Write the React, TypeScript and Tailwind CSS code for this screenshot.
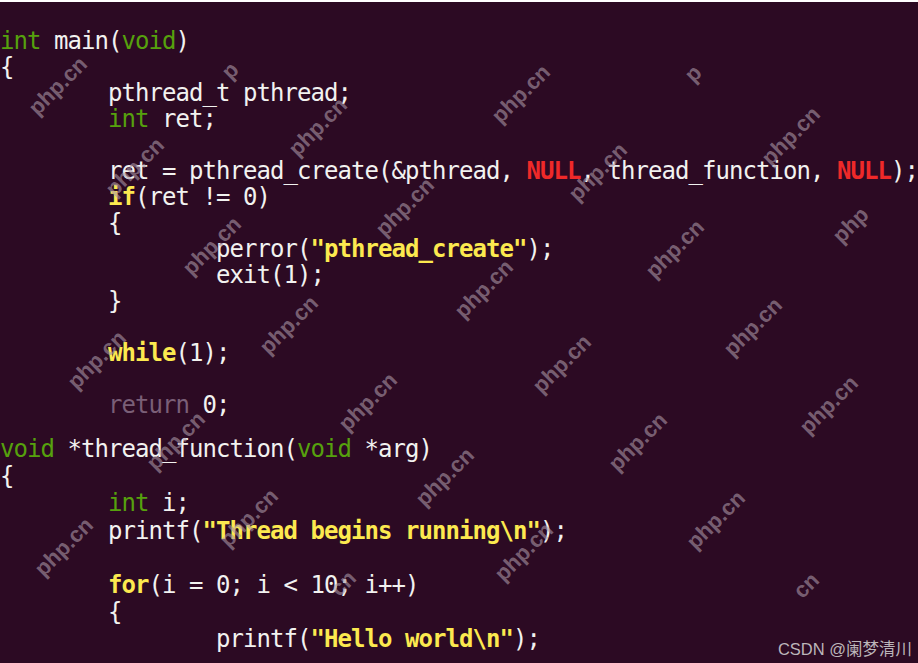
import React from "react";

type Kind = "txt" | "type" | "kw" | "str" | "null" | "dim";
type Tok = [string, Kind];
type Line = Tok[];

const T = "        ";
const TT = T + T;

const colors: Record<Kind, string> = {
  txt: "text-[#f2f2f0]",
  type: "text-[#56a10d]",
  kw: "text-[#fce94f] font-bold",
  str: "text-[#fce94f] font-bold",
  null: "text-[#ef2929] font-bold",
  dim: "text-[#7a5f77]",
};

const mainLines: Line[] = [
  [["int", "type"], [" main(", "txt"], ["void", "type"], [")", "txt"]],
  [["{", "txt"]],
  [[T + "pthread_t pthread;", "txt"]],
  [[T, "txt"], ["int", "type"], [" ret;", "txt"]],
  [],
  [
    [T + "ret = pthread_create(&pthread, ", "txt"],
    ["NULL", "null"],
    [", thread_function, ", "txt"],
    ["NULL", "null"],
    [");", "txt"],
  ],
  [[T, "txt"], ["if", "kw"], ["(ret != 0)", "txt"]],
  [[T + "{", "txt"]],
  [[TT + "perror(", "txt"], ['"pthread_create"', "str"], [");", "txt"]],
  [[TT + "exit(1);", "txt"]],
  [[T + "}", "txt"]],
  [],
  [[T, "txt"], ["while", "kw"], ["(1);", "txt"]],
  [],
  [[T, "txt"], ["return", "dim"], [" 0;", "txt"]],
];

const threadLines: Line[] = [
  [["void", "type"], [" *thread_function(", "txt"], ["void", "type"], [" *arg)", "txt"]],
  [["{", "txt"]],
  [[T, "txt"], ["int", "type"], [" i;", "txt"]],
  [[T + "printf(", "txt"], ['"Thread begins running\\n"', "str"], [");", "txt"]],
  [],
  [[T, "txt"], ["for", "kw"], ["(i = 0; i < 10; i++)", "txt"]],
  [[T + "{", "txt"]],
  [[TT + "printf(", "txt"], ['"Hello world\\n"', "str"], [");", "txt"]],
];

// watermark centres; hide = leading chars faded out, show = chars kept
type Mark = { x: number; y: number; hide?: number; show?: number };

const marks: Mark[] = [
  { x: 58, y: 86 },
  { x: 135, y: 167 },
  { x: 212, y: 246 },
  { x: 289, y: 325 },
  { x: 368, y: 402 },
  { x: 445, y: 477 },
  { x: 524, y: 552 },
  { x: 97, y: 360 },
  { x: 176, y: 441 },
  { x: 249, y: 518 },
  { x: 64, y: 547 },
  { x: 318, y: 127 },
  { x: 405, y: 207 },
  { x: 484, y: 289 },
  { x: 562, y: 364 },
  { x: 638, y: 442 },
  { x: 716, y: 520 },
  { x: 521, y: 94 },
  { x: 598, y: 172 },
  { x: 675, y: 249 },
  { x: 753, y: 327 },
  { x: 829, y: 405 },
  { x: 791, y: 136 },
  { x: 862, y: 214, show: 3 },
  { x: 327, y: 600, hide: 4 },
  { x: 790, y: 602, hide: 4 },
  { x: 251, y: 50, show: 1 },
  { x: 714, y: 53, show: 1 },
];

function CodeLine({ line }: { line: Line }) {
  return (
    <div className="whitespace-pre">
      {line.length === 0 ? " " : null}
      {line.map((t, i) => (
        <span key={i} className={colors[t[1]]}>
          {t[0]}
        </span>
      ))}
    </div>
  );
}

function Watermark({ m }: { m: Mark }) {
  const word = "php.cn";
  const from = m.hide ?? 0;
  const to = m.show ?? word.length;
  return (
    <div
      className="absolute -translate-x-1/2 -translate-y-1/2 -rotate-45 whitespace-pre text-[22px] font-bold leading-none text-[rgba(170,150,165,0.62)]"
      style={{ left: m.x, top: m.y, fontFamily: '"Liberation Sans", Arial, sans-serif' }}
    >
      <span className="text-transparent">{word.slice(0, from)}</span>
      {word.slice(from, to)}
      <span className="text-transparent">{word.slice(to)}</span>
    </div>
  );
}

export default function App() {
  return (
    <div className="relative h-[663px] w-[918px] overflow-hidden bg-[#2c0a23]">
      <div className="h-[2px] bg-white" />
      <div
        className="pt-[26px] text-[24px] tracking-[-0.95px]"
        style={{ fontFamily: '"DejaVu Sans Mono", "Liberation Mono", monospace' }}
      >
        <div className="leading-[26px]">
          {mainLines.map((l, i) => (
            <CodeLine key={i} line={l} />
          ))}
        </div>
        <div className="mt-[18px] leading-[27.2px]">
          {threadLines.map((l, i) => (
            <CodeLine key={i} line={l} />
          ))}
        </div>
      </div>

      <div className="pointer-events-none absolute inset-0">
        {marks.map((m, i) => (
          <Watermark key={i} m={m} />
        ))}
      </div>

      <div
        className="absolute bottom-[6px] right-[6px] text-[16.5px] leading-none text-[#bcb6ba]"
        style={{ fontFamily: '"Liberation Sans", "Noto Sans CJK SC", sans-serif' }}
      >
        CSDN @阑梦清川
      </div>
    </div>
  );
}
